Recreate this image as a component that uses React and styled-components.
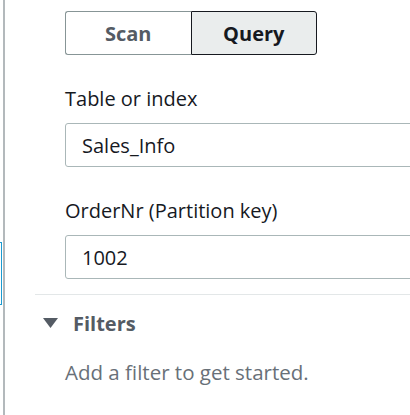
import React from "react";
import styled, { createGlobalStyle } from "styled-components";

const Global = createGlobalStyle`
  html, body { margin: 0; padding: 0; background: #ffffff; }
  body { font-family: "Open Sans", "Noto Sans", sans-serif; color: #16191f; }
  * { box-sizing: border-box; }
`;

const Page = styled.div`
  display: flex;
  width: 410px;
  height: 415px;
  overflow: hidden;
`;

const Rail = styled.div`
  flex: 0 0 5px;
  border-right: 2px solid #b3b9bc;
  padding-top: 242px;
`;

const FocusMark = styled.div`
  width: 2px;
  height: 63px;
  border: 1px solid #1a9bd1;
  border-left: none;
`;

const Main = styled.div`
  flex: 1;
  padding-left: 30px;
  min-width: 0;
`;

const Form = styled.div`
  padding: 11px 0 0 30px;
  display: flex;
  flex-direction: column;
`;

const Segmented = styled.div`
  display: flex;
  width: 252px;
  height: 44px;
`;

const Segment = styled.button`
  flex: 1;
  height: 44px;
  font-family: inherit;
  font-size: 20px;
  font-weight: 700;
  padding: 0;
  cursor: pointer;
  color: ${(p) => (p.$active ? "#16191f" : "#545b64")};
  background: ${(p) => (p.$active ? "#eaeded" : "#ffffff")};
  border: 1px solid ${(p) => (p.$active ? "#16191f" : "#879596")};
  border-radius: ${(p) => (p.$first ? "3px 0 0 3px" : "0 3px 3px 0")};
  ${(p) => (p.$first ? "border-right: none;" : "")}
`;

const Field = styled.div`
  display: flex;
  flex-direction: column;
  margin-top: ${(p) => p.$top}px;
`;

const Label = styled.label`
  font-size: 20px;
  line-height: 26px;
  color: #16191f;
  margin-bottom: 11px;
`;

const Input = styled.div`
  height: 44px;
  margin-right: -20px;
  border: 1px solid #aab7b8;
  border-radius: 3px;
  padding-left: 16px;
  display: flex;
  align-items: center;
  font-size: 20px;
  color: #16191f;
`;

const Divider = styled.div`
  margin-top: 15px;
  border-top: 1px solid #e3e7e8;
`;

const Expander = styled.div`
  display: flex;
  align-items: center;
  padding: 10px 0 0 8px;
  gap: 15px;
  height: 46px;
`;

const Caret = styled.svg`
  width: 15px;
  height: 10px;
  flex: 0 0 auto;
`;

const ExpanderTitle = styled.span`
  font-size: 20px;
  font-weight: 700;
  color: #545b64;
`;

const Hint = styled.p`
  margin: 17px 0 0 30px;
  font-size: 20.5px;
  color: #687078;
`;

export default function App() {
  return (
    <>
      <Global />
      <Page>
        <Rail>
          <FocusMark />
        </Rail>
        <Main>
          <Form>
            <Segmented>
              <Segment $first>Scan</Segment>
              <Segment $active>Query</Segment>
            </Segmented>
            <Field $top={31}>
              <Label>Table or index</Label>
              <Input>Sales_Info</Input>
            </Field>
            <Field $top={31}>
              <Label>OrderNr (Partition key)</Label>
              <Input>1002</Input>
            </Field>
          </Form>
          <Divider />
          <Expander>
            <Caret viewBox="0 0 15 10">
              <polygon points="0,0 15,0 7.5,10" fill="#545b64" />
            </Caret>
            <ExpanderTitle>Filters</ExpanderTitle>
          </Expander>
          <Hint>Add a filter to get started.</Hint>
        </Main>
      </Page>
    </>
  );
}
